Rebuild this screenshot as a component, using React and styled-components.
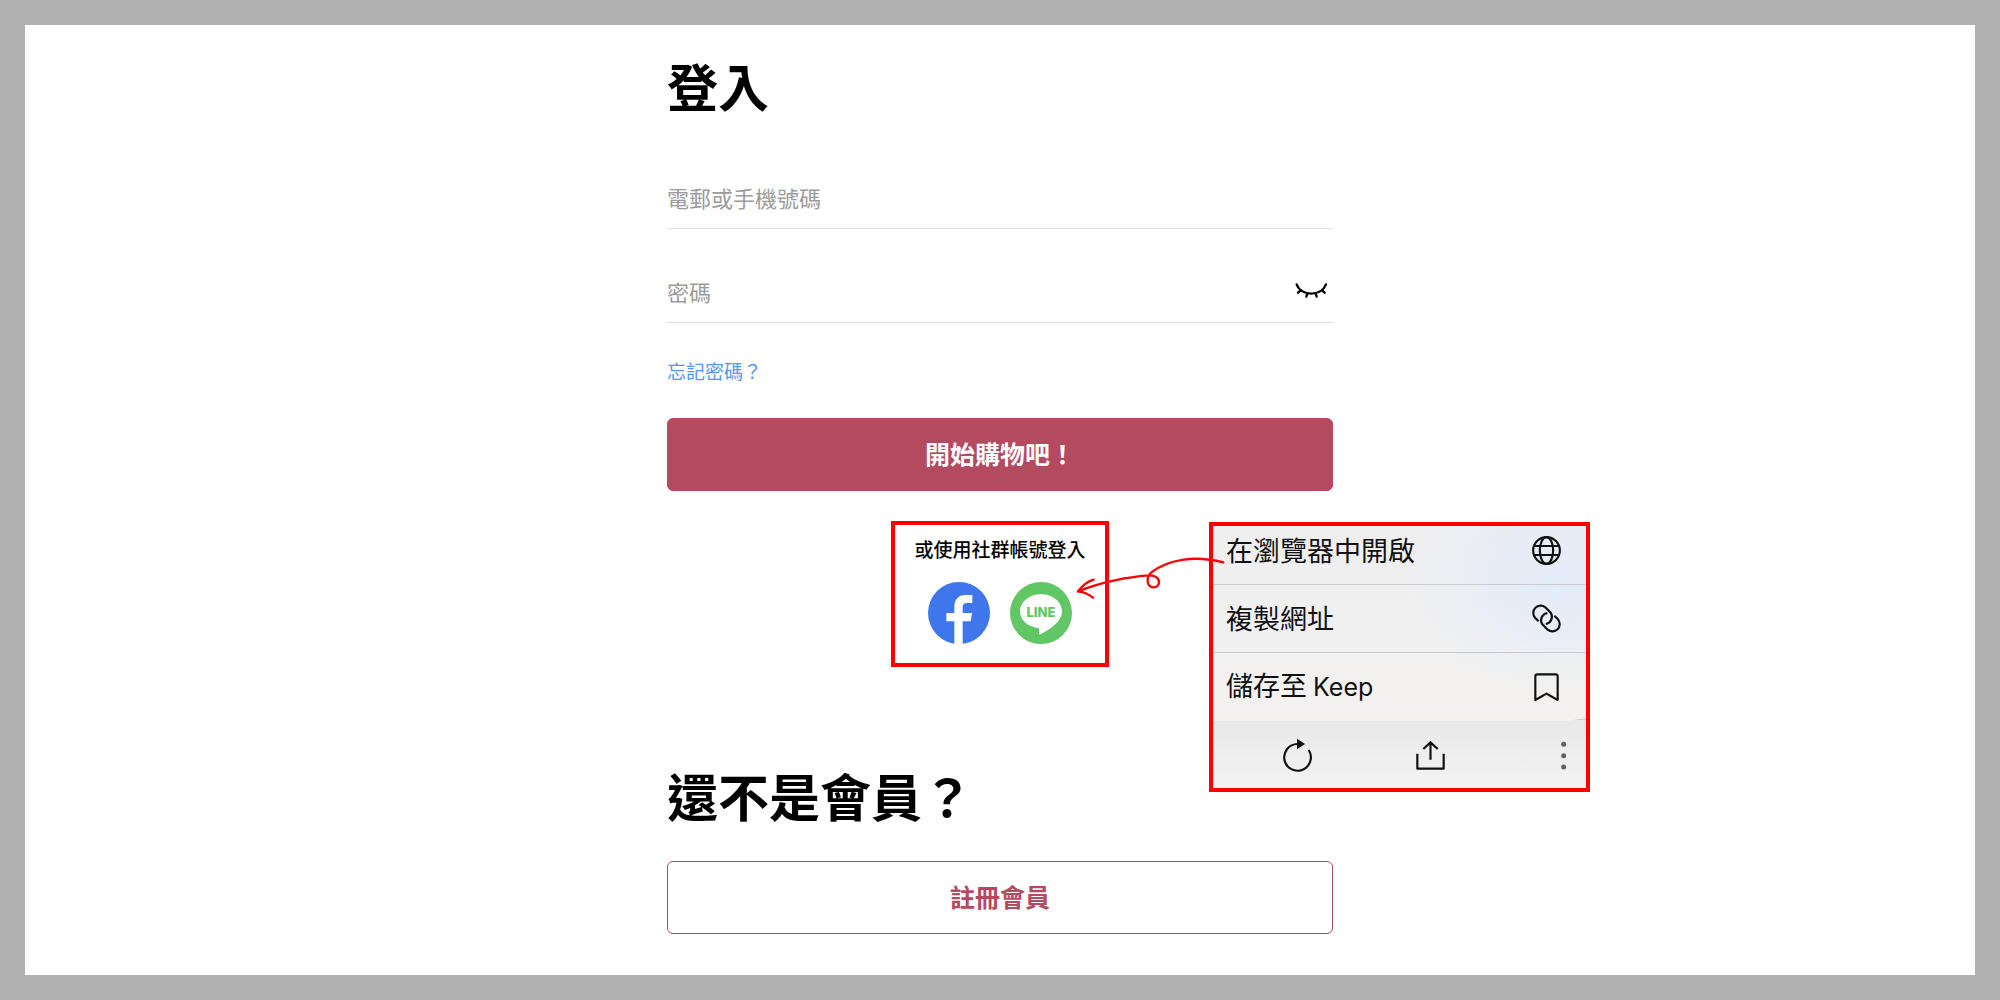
import React, { useState } from 'react';
import styled, { createGlobalStyle } from 'styled-components';

const GlobalStyle = createGlobalStyle`
    * {
        box-sizing: border-box;
    }

    body {
        margin: 0;
        font-family: "Noto Sans CJK TC", "Noto Sans", sans-serif;
        color: #000;
    }

    button, input {
        font-family: inherit;
    }
`;

const Page = styled.div`
    min-height: 100vh;
    padding: 25px;
    background-color: #b1b1b1;
    display: flex;
`;

const Sheet = styled.main`
    flex: 1;
    padding: 30px 20px 40px;
    background-color: #fff;
    display: flex;
    flex-direction: column;
    align-items: center;
`;

const Column = styled.div`
    width: 100%;
    max-width: 666px;
    display: flex;
    flex-direction: column;
`;

const Form = styled.form`
    display: flex;
    flex-direction: column;
    align-items: flex-start;
    margin-top: 20px;
`;

const Title = styled.h1`
    margin: 0;
    font-size: 51px;
    line-height: 60px;
    font-weight: 700;
`;

const Field = styled.label`
    display: flex;
    align-items: center;
    width: 100%;
    margin-top: 33px;
    padding-right: 6px;
    border-bottom: 1px solid #e2e2e2;
`;

const Input = styled.input`
    flex: 1;
    min-width: 0;
    height: 60px;
    padding: 0 0 3px;
    border: none;
    outline: none;
    background: none;
    font-size: 22px;

    &::placeholder {
        color: #9b9b9b;
        opacity: 1;
    }
`;

const IconButton = styled.button`
    display: flex;
    padding: 0;
    border: none;
    background: none;
    color: #111;
    cursor: pointer;
`;

const ForgotLink = styled.a`
    margin: 34px 0 33px;
    font-size: 19px;
    line-height: 28px;
    color: #5596f8;
    text-decoration: none;
`;

const Button = styled.button`
    width: 100%;
    height: 73px;
    padding: 0 0 3px;
    border: 1px solid #b44a5f;
    border-radius: 6px;
    background-color: ${(props) => (props.$outline ? '#fff' : '#b44a5f')};
    color: ${(props) => (props.$outline ? '#b44a5f' : '#fff')};
    font-size: 25px;
    font-weight: 700;
    cursor: pointer;
`;

const SocialSection = styled.section`
    position: relative;
    display: flex;
    justify-content: center;
    margin: 30px 0 98px;
`;

const SocialBox = styled.div`
    width: 218px;
    height: 146px;
    padding-top: 10px;
    border: 4px solid #ff0000;
    display: flex;
    flex-direction: column;
    align-items: center;
`;

const SocialLabel = styled.p`
    margin: 0;
    font-size: 19px;
    line-height: 28px;
    font-weight: 500;
    white-space: nowrap;
`;

const SocialButtons = styled.div`
    display: flex;
    gap: 20px;
    margin-top: 19px;
`;

const SignUp = styled.section`
    display: flex;
    flex-direction: column;
    gap: 36px;
`;

/* The menu and the arrow are laid over the login page */
const MenuBox = styled.div`
    position: absolute;
    top: 1px;
    left: 542px;
    width: 381px;
    border: 4px solid #ff0000;
    background-color: #e9e9e9;
`;

const ArrowOverlay = styled.svg`
    position: absolute;
    top: 33px;
    left: 407px;
    z-index: 2;
    pointer-events: none;
`;

const MenuList = styled.ul`
    position: relative;
    z-index: 1;
    margin: 0;
    padding: 0;
    list-style: none;
    border-bottom-right-radius: 24px 8px;
    overflow: hidden;
    background:
        radial-gradient(ellipse 150px 110px at 92% 30%, #e2ecf9, rgba(226, 236, 249, 0)),
        linear-gradient(#eeeeef, #f1f0f1 50%, #f3f2ef);
`;

const MenuItem = styled.li`
    height: ${(props) => (props.$cut ? '59px' : '68px')};
    padding-bottom: ${(props) => (props.$cut ? '9px' : '0')};
    border-bottom: 1px solid #c9cbd0;

    &:last-child {
        border-bottom: none;
    }
`;

const MenuButton = styled.button`
    width: 100%;
    height: 100%;
    padding: 0 25px 0 13px;
    border: none;
    background: none;
    display: flex;
    align-items: center;
    justify-content: space-between;
    font-size: 27px;
    line-height: 40px;
    color: #111;
    cursor: pointer;
`;

const MenuText = styled.span`
    padding-bottom: 2px;
`;

const Latin = styled.span`
    font-family: Inter, sans-serif;
    font-size: 25px;
`;

const Toolbar = styled.div`
    height: 69px;
    margin-top: -2px;
    padding: 2px 9px 0 70px;
    border-top: 1px solid #cfcfcf;
    background: linear-gradient(#e8e8e8, #f3f3f3);
    display: flex;
    align-items: center;
    justify-content: space-between;
`;

const EyeClosedIcon = () => (
    <svg width="32" height="18" viewBox="0 0 96 54" fill="none" stroke="#000" strokeWidth="7" strokeLinecap="round">
        <path d="M5 4C19 41 79 41 93 4" />
        <path d="M17 22l-8 7M37 32l-3 9M62 32l3 9M81 22l8 7" />
    </svg>
);

const FacebookIcon = () => (
    <svg width="62" height="62" viewBox="0 0 186 186">
        <circle cx="93" cy="93" r="93" fill="#3f76ea" />
        <path
            d="M79 187V118H55V93H79V76C79 52 91 39 113 39H133V63H119C108 63 104 67 104 76V93H132L128 118H104V187Z"
            fill="#fff"
        />
    </svg>
);

const LineIcon = () => (
    <svg width="62" height="62" viewBox="0 0 186 186">
        <circle cx="93" cy="93" r="93" fill="#61c664" />
        <path
            d="M93 37C58 37 30 60 30 88C30 114 53 135 83 138C89 139 88 144 87 155C87 158 90 158 93 156C113 146 156 121 156 88C156 60 128 37 93 37Z"
            fill="#fff"
        />
        <text x="93" y="104" textAnchor="middle" fontFamily="Inter, sans-serif" fontSize="39" fontWeight="800" fill="#61c664">
            LINE
        </text>
    </svg>
);

const OutlineIcon = ({ children, viewBox = '0 0 87 87' }) => (
    <svg width="29" height="29" viewBox={viewBox} fill="none" stroke="#111" strokeWidth="6.5">
        {children}
    </svg>
);

const GlobeIcon = () => (
    <OutlineIcon>
        <circle cx="43.5" cy="43.5" r="40" />
        <ellipse cx="43.5" cy="43.5" rx="20" ry="40" />
        <path d="M5 30H82M5 57H82" />
    </OutlineIcon>
);

const LinkIcon = () => (
    <OutlineIcon viewBox="996 283 87 87">
        <path d="M1016 335L1005 324A22 22 0 0 1 1036 293L1052 309A22 22 0 0 1 1037 343" />
        <path d="M1063 318L1074 329A22 22 0 0 1 1043 360L1027 344A22 22 0 0 1 1042 310" />
    </OutlineIcon>
);

const BookmarkIcon = () => (
    <OutlineIcon>
        <path d="M10 81V10Q10 4 16 4H71Q77 4 77 10V81L43.5 62Z" strokeLinejoin="round" />
    </OutlineIcon>
);

const ReloadIcon = () => (
    <svg width="29" height="34" viewBox="0 0 87 102" fill="none" stroke="#111" strokeWidth="6.5">
        <path d="M77 36A40 40 0 1 1 43 18" />
        <path d="M42 2V34L66 18Z" fill="#111" stroke="none" />
    </svg>
);

const ShareIcon = () => (
    <OutlineIcon>
        <path d="M4 38V83H83V38" strokeLinejoin="round" />
        <path d="M43.5 56V4M22 24L43.5 4L65 24" />
    </OutlineIcon>
);

const MoreIcon = () => (
    <svg width="29" height="29" viewBox="0 0 87 87" fill="#606060">
        <circle cx="47" cy="10" r="7.5" />
        <circle cx="47" cy="44" r="7.5" />
        <circle cx="47" cy="78" r="7.5" />
    </svg>
);

const Arrow = () => (
    <ArrowOverlay
        width="154"
        height="50"
        viewBox="42 132 462 150"
        fill="none"
        stroke="#ff0000"
        strokeWidth="7"
        strokeLinecap="round"
        strokeLinejoin="round"
    >
        <path d="M490 157C400 134 322 150 274 187C262 197 260 214 266 224C274 236 292 234 296 222C301 208 288 196 270 196C210 199 120 217 54 244" />
        <path d="M101 209C82 215 66 228 54 244C70 246 86 252 99 263" />
    </ArrowOverlay>
);

const App = () => {
    const [showPassword, setShowPassword] = useState(false);

    return (
        <Page lang="zh-Hant">
            <GlobalStyle />
            <Sheet>
                <Column>
                    <Title>登入</Title>
                    <Form onSubmit={(e) => e.preventDefault()}>
                        <Field>
                            <Input type="text" placeholder="電郵或手機號碼" aria-label="電郵或手機號碼" />
                        </Field>
                        <Field>
                            <Input
                                type={showPassword ? 'text' : 'password'}
                                placeholder="密碼"
                                aria-label="密碼"
                            />
                            <IconButton
                                type="button"
                                aria-label="顯示密碼"
                                onClick={() => setShowPassword(!showPassword)}
                            >
                                <EyeClosedIcon />
                            </IconButton>
                        </Field>
                        <ForgotLink href="#forgot">忘記密碼？</ForgotLink>
                        <Button type="submit">開始購物吧！</Button>
                    </Form>

                    <SocialSection>
                        <SocialBox>
                            <SocialLabel>或使用社群帳號登入</SocialLabel>
                            <SocialButtons>
                                <IconButton type="button" aria-label="Facebook">
                                    <FacebookIcon />
                                </IconButton>
                                <IconButton type="button" aria-label="LINE">
                                    <LineIcon />
                                </IconButton>
                            </SocialButtons>
                        </SocialBox>

                        <MenuBox>
                            <MenuList>
                                <MenuItem $cut>
                                    <MenuButton type="button">
                                        <MenuText>在瀏覽器中開啟</MenuText>
                                        <GlobeIcon />
                                    </MenuButton>
                                </MenuItem>
                                <MenuItem>
                                    <MenuButton type="button">
                                        <MenuText>複製網址</MenuText>
                                        <LinkIcon />
                                    </MenuButton>
                                </MenuItem>
                                <MenuItem>
                                    <MenuButton type="button">
                                        <MenuText>儲存至 <Latin>Keep</Latin></MenuText>
                                        <BookmarkIcon />
                                    </MenuButton>
                                </MenuItem>
                            </MenuList>
                            <Toolbar>
                                <IconButton type="button" aria-label="重新整理">
                                    <ReloadIcon />
                                </IconButton>
                                <IconButton type="button" aria-label="分享">
                                    <ShareIcon />
                                </IconButton>
                                <IconButton type="button" aria-label="更多">
                                    <MoreIcon />
                                </IconButton>
                            </Toolbar>
                        </MenuBox>
                        <Arrow />
                    </SocialSection>

                    <SignUp>
                        <Title as="h2">還不是會員？</Title>
                        <Button type="button" $outline>註冊會員</Button>
                    </SignUp>
                </Column>
            </Sheet>
        </Page>
    );
};

export default App;
